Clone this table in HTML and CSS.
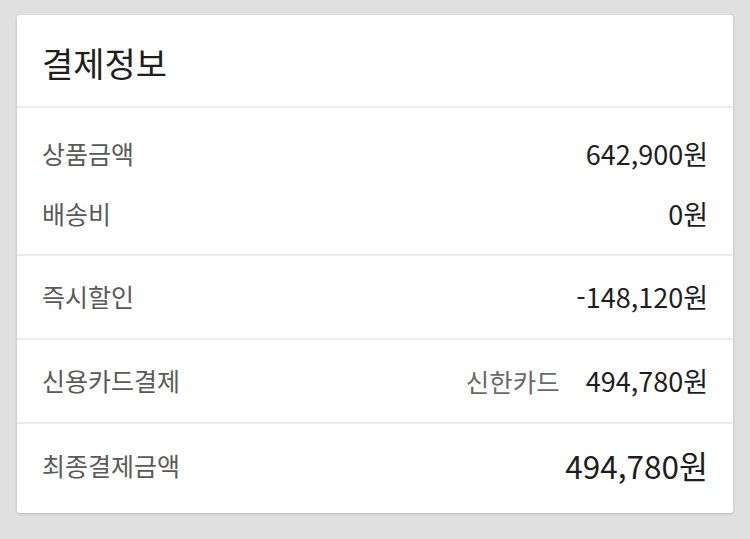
FILE: index.html
```html
<!DOCTYPE html>
<html lang="ko">
<head>
<meta charset="utf-8">
<title>결제정보</title>
<link rel="stylesheet" href="styles.css">
</head>
<body>
<div class="card">
  <div class="card-header">결제정보</div>
  <div class="section section-first">
    <div class="row"><span class="label">상품금액</span><span class="value">642,900원</span></div>
    <div class="row"><span class="label">배송비</span><span class="value">0원</span></div>
  </div>
  <div class="section">
    <div class="row"><span class="label">즉시할인</span><span class="value">-148,120원</span></div>
  </div>
  <div class="section">
    <div class="row"><span class="label">신용카드결제</span><span class="value"><span class="sub">신한카드</span>494,780원</span></div>
  </div>
  <div class="section section-last">
    <div class="row"><span class="label">최종결제금액</span><span class="value value-total">494,780원</span></div>
  </div>
</div>
</body>
</html>
```

FILE: styles.css
```css
html, body {
  margin: 0;
  padding: 0;
}
body {
  background: #e0e0e0;
  padding: 15px 17px;
  font-family: "Noto Sans CJK KR", "Noto Sans", sans-serif;
  color: #222;
}
.card {
  background: #fff;
  border-radius: 3px;
  box-shadow: 0 1px 3px rgba(0, 0, 0, 0.18);
  width: 716px;
  height: 498px;
  box-sizing: border-box;
}
.card-header {
  height: 93px;
  box-sizing: border-box;
  padding: 4px 25px 0;
  display: flex;
  align-items: center;
  font-size: 34px;
  color: #1e1e1e;
  border-bottom: 2px solid #ebebeb;
}
.section {
  padding: 23px 25px 25px;
  border-bottom: 2px solid #ebebeb;
  display: flex;
  flex-direction: column;
  gap: 26px;
}
.section-first {
  padding-top: 28px;
  padding-bottom: 24px;
}
.section-last {
  border-bottom: none;
  padding-top: 24px;
}
.row {
  display: flex;
  justify-content: space-between;
  align-items: center;
  height: 34px;
  font-size: 25px;
}
.label {
  color: #5a5a5a;
}
.value {
  color: #1e1e1e;
  display: flex;
  align-items: center;
  font-size: 27px;
}
.sub {
  color: #6a6a6a;
  font-size: 25.5px;
  margin-right: 26px;
}
.value-total {
  font-size: 31.5px;
}
```
